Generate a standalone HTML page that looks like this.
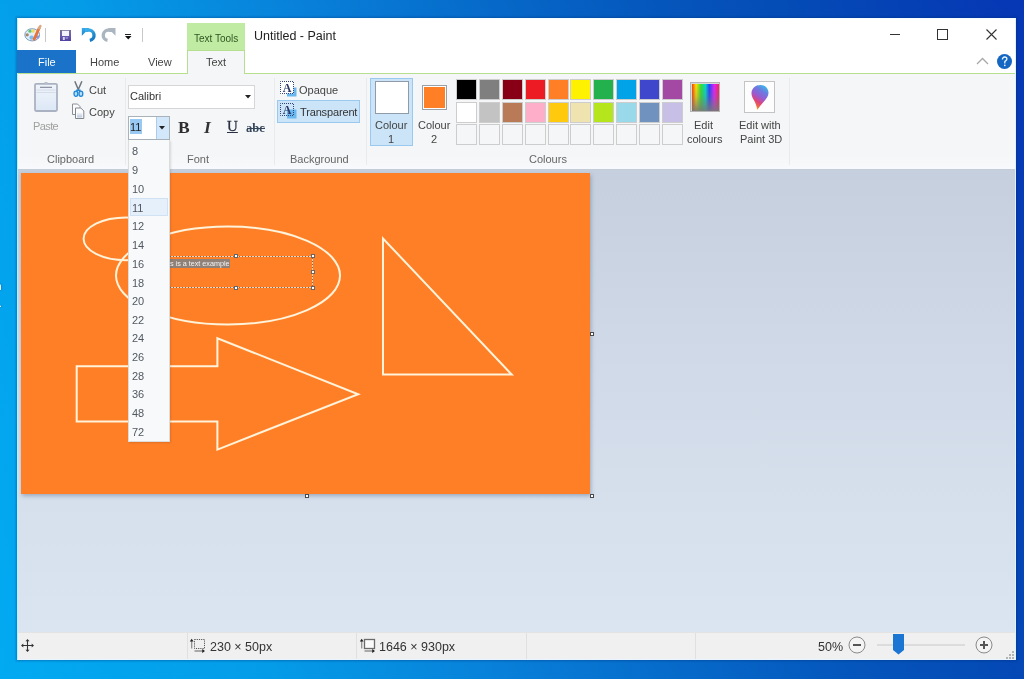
<!DOCTYPE html>
<html><head><meta charset="utf-8">
<style>
*{margin:0;padding:0;box-sizing:border-box}
html,body{width:1024px;height:679px;overflow:hidden;-webkit-font-smoothing:antialiased}
body{position:relative;font-family:"Liberation Sans",sans-serif;
background:linear-gradient(74deg,#02aaf2 0%,#049ce8 22%,#0880d9 41%,#0668c8 57%,#0556bc 70%,#044cb6 80%,#0636b4 100%);}
.a{position:absolute}
.t{position:absolute;white-space:nowrap;color:#333;line-height:1;padding-top:1px;will-change:transform}
.sep{position:absolute;width:1px;background:#e9eaec}
.cell{position:absolute;width:21px;height:21px;border:1px solid #cdcdcd;background:#f5f6f7}
.cell i{position:absolute;left:0;top:0;right:0;bottom:0;display:block}
.dd{position:absolute;left:132px;font-size:11px;color:#525860;line-height:1;padding-top:1px;will-change:transform}
svg{position:absolute;overflow:visible}
</style></head>
<body>
<!-- window base -->
<div class="a" style="left:16px;top:17px;width:1001px;height:644px;background:rgba(0,40,110,0.35);filter:blur(1px)"></div>
<div class="a" style="left:17px;top:18px;width:999px;height:642px;background:#fff;border:1px solid #b4f0ff;border-top-color:#f4feff;border-right-color:#dcf4ff;border-bottom-color:#e8f4ff"></div>
<div class="t" style="left:-4px;top:281px;font-size:10px;color:#fff;text-shadow:0 0 2px #003060">n</div>
<div class="t" style="left:-1px;top:298px;font-size:10px;color:#fff;text-shadow:0 0 2px #003060">.</div>

<!-- ===== TITLE BAR ===== -->
<svg style="left:24px;top:25px" width="18" height="17" viewBox="0 0 18 17">
  <ellipse cx="8.2" cy="9.8" rx="7.4" ry="6.1" fill="#e2eef8" stroke="#7b9ec2" stroke-width="1"/>
  <circle cx="3.2" cy="9.8" r="1.6" fill="#a88462"/>
  <circle cx="6" cy="6.2" r="1.6" fill="#62c474"/>
  <circle cx="9.2" cy="6" r="1.7" fill="#f2da66"/>
  <circle cx="7.6" cy="12.6" r="2.2" fill="#84bcf0"/>
  <circle cx="13.6" cy="12" r="1.8" fill="#8a98e2"/>
  <path d="M10.2 14.2 L15.2 3.2" stroke="#ea7238" stroke-width="2.8" stroke-linecap="round"/>
  <path d="M15 3.2 L16.3 1.2" stroke="#dca884" stroke-width="2.6" stroke-linecap="round"/>
</svg>
<div class="a" style="left:45px;top:28px;width:1px;height:14px;background:#c8c8c8"></div>
<svg style="left:60px;top:29.5px" width="11" height="11" viewBox="0 0 11 11">
  <defs><linearGradient id="sg" x1="0" y1="0" x2="0" y2="1"><stop offset="0" stop-color="#7a7098"/><stop offset="0.5" stop-color="#6a5cb0"/><stop offset="1" stop-color="#5040a0"/></linearGradient></defs>
  <rect x="0" y="0" width="11" height="11" fill="url(#sg)"/>
  <rect x="2" y="0.8" width="7" height="5.2" fill="#f4f2fa"/>
  <rect x="2.8" y="7" width="2" height="3" fill="#d8d2f0"/>
  <rect x="5.5" y="7.2" width="2.5" height="1.5" fill="#9a90d0"/>
</svg>
<svg style="left:80px;top:27px" width="18" height="17" viewBox="0 0 18 17">
  <defs><linearGradient id="ug" x1="0" y1="0" x2="0.4" y2="1"><stop offset="0" stop-color="#3cb0ec"/><stop offset="1" stop-color="#1a7cc4"/></linearGradient></defs>
  <path d="M1.8 1 V8.8 L9.5 1 Z" fill="url(#ug)"/>
  <path d="M5 3.2 H8 A5.1 5.1 0 0 1 9.8 13.3" fill="none" stroke="url(#ug)" stroke-width="3.4"/>
</svg>
<svg style="left:100px;top:27px" width="18" height="17" viewBox="0 0 18 17">
  <path d="M15.5 1 V8.8 L7.8 1 Z" fill="#aab5c0"/>
  <path d="M12.3 3.2 H9.3 A5.1 5.1 0 0 0 7.5 13.3" fill="none" stroke="#aab5c0" stroke-width="3.4"/>
</svg>
<div class="a" style="left:125px;top:34px;width:6px;height:1px;background:#222"></div>
<svg style="left:125px;top:36px" width="7" height="4" viewBox="0 0 7 4"><path d="M0 0 H6.5 L3.25 3.5Z" fill="#111"/></svg>
<div class="a" style="left:142px;top:28px;width:1px;height:14px;background:#c8c8c8"></div>
<!-- window controls -->
<div class="a" style="left:890px;top:34px;width:10px;height:1px;background:#333"></div>
<div class="a" style="left:937px;top:29px;width:11px;height:11px;border:1px solid #333"></div>
<svg style="left:986px;top:29px" width="11" height="11" viewBox="0 0 11 11"><path d="M0.5 0.5 L10.5 10.5 M10.5 0.5 L0.5 10.5" stroke="#333" stroke-width="1.1"/></svg>
<svg style="left:976px;top:57px" width="13" height="8" viewBox="0 0 13 8"><path d="M1 7 L6.5 1.5 L12 7" fill="none" stroke="#a8a8a8" stroke-width="1.3"/></svg>
<svg style="left:997px;top:54px" width="15" height="15" viewBox="0 0 15 15"><circle cx="7.5" cy="7.5" r="7.5" fill="#1566c2"/><path d="M5.4 5.4 C5.4 3.9 6.4 3 7.7 3 C9 3 9.9 3.8 9.9 5 C9.9 6.3 8.4 6.8 7.8 7.7 V9.4" fill="none" stroke="#e8f6ff" stroke-width="1.3"/><circle cx="7.8" cy="11.3" r="0.85" fill="#e8f6ff"/></svg>
<div class="t" style="left:254px;top:28.5px;font-size:12.5px;color:#222">Untitled - Paint</div>
<div class="a" style="left:187px;top:23px;width:58px;height:27px;background:#c0eba2"></div>
<div class="t" style="left:194px;top:32.5px;font-size:10px;color:#2f5624">Text Tools</div>

<!-- ===== TABS ===== -->
<div class="a" style="left:17px;top:50px;width:59px;height:23px;background:#1a72c9"></div>
<div class="t" style="left:38px;top:56px;font-size:11px;color:#fff">File</div>
<div class="t" style="left:90px;top:56px;font-size:11px;color:#444">Home</div>
<div class="t" style="left:148px;top:56px;font-size:11px;color:#444">View</div>
<div class="a" style="left:18px;top:73px;width:997px;height:1px;background:#b6e090"></div>
<div class="a" style="left:187px;top:50px;width:58px;height:24px;background:#f5f6f7;border:1px solid #b6e090;border-bottom:none"></div>
<div class="t" style="left:206px;top:56px;font-size:11px;color:#444">Text</div>

<!-- ===== RIBBON ===== -->
<div class="a" style="left:18px;top:74px;width:997px;height:96px;background:linear-gradient(180deg,#f5f6f7 0%,#f5f6f7 85%,#f7f9fc 100%);border-bottom:1px solid #c4ccd8"></div>
<!-- Clipboard -->
<svg style="left:34px;top:82px" width="24" height="30" viewBox="0 0 24 30">
  <defs><linearGradient id="pg" x1="0" y1="0" x2="0" y2="1"><stop offset="0" stop-color="#f0f4fa"/><stop offset="1" stop-color="#dce8f6"/></linearGradient></defs>
  <rect x="1" y="1.8" width="22" height="27.2" rx="1.2" fill="url(#pg)" stroke="#aab2c2" stroke-width="1.8"/>
  <path d="M6 5.3 H18" stroke="#7d8596" stroke-width="1.1"/>
  <path d="M2.5 8 H21.5 M2.5 10.5 H21.5" stroke="#d0d8e4" stroke-width="0.8"/>
  <rect x="10.5" y="0" width="3" height="2" fill="#b8bec8"/>
</svg>
<div class="t" style="left:33px;top:120px;font-size:11px;color:#a0a0a0;letter-spacing:-0.6px">Paste</div>
<svg style="left:73px;top:81px" width="11" height="17" viewBox="0 0 11 17">
  <path d="M1.8 0.3 L5.4 8.8 M8.9 0.3 L5.2 8.8" stroke="#6e757d" stroke-width="1.5"/>
  <path d="M3.2 9.3 H7.6" stroke="#1e88d8" stroke-width="1.6"/>
  <ellipse cx="2.9" cy="12.8" rx="1.9" ry="2.6" fill="#b6def6" stroke="#1e88d8" stroke-width="1.3"/>
  <ellipse cx="7.9" cy="12.8" rx="1.9" ry="2.6" fill="#b6def6" stroke="#1e88d8" stroke-width="1.3"/>
</svg>
<div class="t" style="left:89px;top:84px;font-size:11px;color:#444">Cut</div>
<svg style="left:71px;top:103px" width="14" height="17" viewBox="0 0 14 17">
  <defs><linearGradient id="cg" x1="0" y1="0" x2="0" y2="1"><stop offset="0" stop-color="#f6f8fb"/><stop offset="1" stop-color="#b8c8dc"/></linearGradient></defs>
  <path d="M1.5 1 H6.5 L9 3.5 V11.5 H1.5 Z" fill="#fbfbfb" stroke="#8a8f98" stroke-width="1"/>
  <path d="M4.5 5 H9.8 L12.8 8 V15.5 H4.5 Z" fill="#fdfdfd" stroke="#80868f" stroke-width="1"/>
  <rect x="6" y="9.5" width="5.3" height="5" fill="url(#cg)"/>
</svg>
<div class="t" style="left:89px;top:106px;font-size:11px;color:#444">Copy</div>
<div class="t" style="left:47px;top:153px;font-size:11px;color:#666">Clipboard</div>
<div class="sep" style="left:125px;top:78px;height:87px"></div>

<!-- Font -->
<div class="a" style="left:128px;top:85px;width:127px;height:24px;background:#fff;border:1px solid #d6d6d6"></div>
<div class="t" style="left:130px;top:90px;font-size:11px;color:#333">Calibri</div>
<svg style="left:245px;top:95px" width="6" height="4" viewBox="0 0 6 4"><path d="M0 0 H6 L3 3.5Z" fill="#222"/></svg>
<div class="a" style="left:128px;top:116px;width:42px;height:24px;background:#fff;border:1px solid #a9b1bb"></div>
<div class="a" style="left:156px;top:117px;width:13px;height:22px;background:#d2e7f9;border-left:1px solid #a8cdee"></div>
<svg style="left:159px;top:126px" width="6" height="4" viewBox="0 0 6 4"><path d="M0 0 H6 L3 3.5Z" fill="#222"/></svg>
<div class="a" style="left:130px;top:119px;width:12px;height:15px;background:#99c9f3"></div>
<div class="t" style="left:130px;top:121px;font-size:11px;color:#222">11</div>
<div class="t" style="left:178px;top:118px;font-size:17.5px;font-family:'Liberation Serif';font-weight:bold;color:#2e2e2e">B</div>
<div class="t" style="left:204px;top:118px;font-size:17.5px;font-family:'Liberation Serif';font-style:italic;font-weight:bold;color:#333">I</div>
<div class="t" style="left:227px;top:118px;font-size:15px;font-family:'Liberation Serif';color:#2a3040;text-decoration:underline;-webkit-text-stroke:0.3px #2a3040">U</div>
<div class="t" style="left:246px;top:121px;font-size:12.5px;font-family:'Liberation Serif';font-weight:bold;color:#34465a">abc</div>
<div class="a" style="left:247px;top:128px;width:18px;height:1px;background:#34465a"></div>
<div class="t" style="left:187px;top:153px;font-size:11px;color:#666">Font</div>
<div class="sep" style="left:274px;top:78px;height:87px"></div>

<!-- Background -->
<svg style="left:279px;top:80px" width="19" height="18" viewBox="0 0 19 18">
  <rect x="8" y="7.5" width="9.5" height="9" fill="#6ab8f0"/>
  <rect x="1.5" y="1.5" width="13" height="12" fill="#fff" stroke="#34447a" stroke-width="1" stroke-dasharray="1 1" stroke-dashoffset="0.5"/>
  <text x="8" y="11.8" font-family="Liberation Serif" font-weight="bold" font-size="12" fill="#2a3868" text-anchor="middle">A</text>
</svg>
<div class="t" style="left:299px;top:84px;font-size:11px;color:#444">Opaque</div>
<div class="a" style="left:277px;top:100px;width:83px;height:23px;background:#cce4f7;border:1px solid #99c9ef"></div>
<svg style="left:279px;top:102px" width="19" height="18" viewBox="0 0 19 18">
  <rect x="8" y="7.5" width="9.5" height="9" fill="#6ab8f0"/>
  <rect x="1.5" y="1.5" width="13" height="12" fill="none" stroke="#34447a" stroke-width="1" stroke-dasharray="1 1" stroke-dashoffset="0.5"/>
  <text x="8" y="11.8" font-family="Liberation Serif" font-weight="bold" font-size="12" fill="#2a3868" text-anchor="middle">A</text>
</svg>
<div class="t" style="left:300px;top:106px;font-size:11px;color:#333;letter-spacing:-0.15px">Transparent</div>
<div class="t" style="left:290px;top:153px;font-size:11px;color:#666">Background</div>
<div class="sep" style="left:366px;top:78px;height:87px"></div>

<!-- Colours -->
<div class="a" style="left:370px;top:78px;width:43px;height:68px;background:#cce4f7;border:1px solid #99c9ef"></div>
<div class="a" style="left:375px;top:81px;width:34px;height:33px;background:#fff;border:1px solid #8f9ba8"></div>
<div class="t" style="left:375px;top:119px;font-size:11px;color:#444">Colour</div>
<div class="t" style="left:388px;top:133px;font-size:11px;color:#444">1</div>
<div class="a" style="left:422px;top:85px;width:25px;height:25px;background:#fff;border:1px solid #9aa0a8"></div>
<div class="a" style="left:424px;top:87px;width:21px;height:21px;background:#ff7f27"></div>
<div class="t" style="left:418px;top:119px;font-size:11px;color:#444">Colour</div>
<div class="t" style="left:431px;top:133px;font-size:11px;color:#444">2</div>
<div class="cell" style="left:456px;top:79px"><i style="background:#000000"></i></div>
<div class="cell" style="left:479px;top:79px"><i style="background:#7f7f7f"></i></div>
<div class="cell" style="left:502px;top:79px"><i style="background:#880015"></i></div>
<div class="cell" style="left:525px;top:79px"><i style="background:#ed1c24"></i></div>
<div class="cell" style="left:548px;top:79px"><i style="background:#ff7f27"></i></div>
<div class="cell" style="left:570px;top:79px"><i style="background:#fff200"></i></div>
<div class="cell" style="left:593px;top:79px"><i style="background:#22b14c"></i></div>
<div class="cell" style="left:616px;top:79px"><i style="background:#00a2e8"></i></div>
<div class="cell" style="left:639px;top:79px"><i style="background:#3f48cc"></i></div>
<div class="cell" style="left:662px;top:79px"><i style="background:#a349a4"></i></div>
<div class="cell" style="left:456px;top:102px"><i style="background:#ffffff"></i></div>
<div class="cell" style="left:479px;top:102px"><i style="background:#c3c3c3"></i></div>
<div class="cell" style="left:502px;top:102px"><i style="background:#b97a57"></i></div>
<div class="cell" style="left:525px;top:102px"><i style="background:#ffaec9"></i></div>
<div class="cell" style="left:548px;top:102px"><i style="background:#ffc90e"></i></div>
<div class="cell" style="left:570px;top:102px"><i style="background:#efe4b0"></i></div>
<div class="cell" style="left:593px;top:102px"><i style="background:#b5e61d"></i></div>
<div class="cell" style="left:616px;top:102px"><i style="background:#99d9ea"></i></div>
<div class="cell" style="left:639px;top:102px"><i style="background:#7092be"></i></div>
<div class="cell" style="left:662px;top:102px"><i style="background:#c8bfe7"></i></div>
<div class="cell" style="left:456px;top:124px"></div>
<div class="cell" style="left:479px;top:124px"></div>
<div class="cell" style="left:502px;top:124px"></div>
<div class="cell" style="left:525px;top:124px"></div>
<div class="cell" style="left:548px;top:124px"></div>
<div class="cell" style="left:570px;top:124px"></div>
<div class="cell" style="left:593px;top:124px"></div>
<div class="cell" style="left:616px;top:124px"></div>
<div class="cell" style="left:639px;top:124px"></div>
<div class="cell" style="left:662px;top:124px"></div>
<div class="t" style="left:529px;top:153px;font-size:11px;color:#666">Colours</div>
<div class="a" style="left:690px;top:82px;width:30px;height:30px;background:#d8d8d8;border:1px solid #b4b4b4;padding:0.5px">
  <div style="width:100%;height:100%;background:linear-gradient(180deg,rgba(120,120,120,0) 0%,rgba(120,120,120,0.25) 45%,rgba(120,120,120,0.9) 100%),linear-gradient(90deg,#ff3a00,#ffe000 15%,#30e030 33%,#00d8c8 50%,#2040ff 64%,#e020ff 82%,#ff2050)"></div>
</div>
<div class="t" style="left:694px;top:119px;font-size:11px;color:#444">Edit</div>
<div class="t" style="left:687px;top:133px;font-size:11px;color:#444">colours</div>
<div class="a" style="left:744px;top:81px;width:31px;height:32px;background:#fdfdfd;border:1px solid #c4c4c4"></div>
<svg style="left:750px;top:84px" width="20" height="27" viewBox="0 0 20 27">
  <defs><linearGradient id="p3d" x1="0.75" y1="0" x2="0.3" y2="1">
    <stop offset="0" stop-color="#38bce8"/><stop offset="0.25" stop-color="#6c7ae0"/><stop offset="0.5" stop-color="#9a5ad0"/><stop offset="0.7" stop-color="#e04478"/><stop offset="0.88" stop-color="#f07040"/><stop offset="1" stop-color="#ffd020"/></linearGradient></defs>
  <path d="M10.5 1 C15.2 1 18.5 4.4 18.5 8.8 C18.5 12.5 16.3 15 13.5 18 C11 20.8 9 23.5 7.2 26 C6.8 22 5.5 19 3.8 16 C2.3 13.5 1.5 11.5 1.5 9.3 C1.5 4.6 5.5 1 10.5 1 Z" fill="url(#p3d)"/>
</svg>
<div class="t" style="left:739px;top:119px;font-size:11px;color:#444">Edit with</div>
<div class="t" style="left:740px;top:133px;font-size:11px;color:#444">Paint 3D</div>
<div class="sep" style="left:789px;top:78px;height:87px"></div>

<!-- ===== CANVAS AREA ===== -->
<div class="a" style="left:18px;top:170px;width:997px;height:462px;background:linear-gradient(180deg,#c5cfdd 0%,#d0d9e7 40%,#dbe5f1 100%)"></div>
<div class="a" style="left:21px;top:173px;width:569px;height:321px;background:#ff7f27;box-shadow:1px 2px 4px rgba(70,90,120,0.4)"></div>
<svg style="left:0;top:0" width="1024" height="679" viewBox="0 0 1024 679">
  <g fill="none" stroke="#fff3da" stroke-width="2">
    <ellipse cx="126" cy="238.8" rx="42.4" ry="21.4"/>
    <ellipse cx="228" cy="275.5" rx="112" ry="49"/>
    <path d="M383 238.5 L383 374.6 L511.8 374.6 Z"/>
    <path d="M76.7 366.3 H217.4 V338.2 L358.2 394.2 L217.4 449.6 V421.4 H76.7 Z"/>
  </g>
</svg>
<!-- text box -->
<div class="a" style="left:169px;top:259px;width:61px;height:9px;background:#8f8178"></div>
<div class="t" style="left:170px;top:259px;font-size:7.2px;color:#f4f4f4;padding-top:1px">s is a text example</div>
<svg style="left:0;top:0" width="1024" height="679" viewBox="0 0 1024 679">
  <path d="M158.5 256.5 H312.5 V287.5 H158.5 Z" fill="none" stroke="#f6d2b0" stroke-width="1"/>
  <path d="M158.5 256.5 H312.5 V287.5 H158.5 Z" fill="none" stroke="#7a6a60" stroke-width="1" stroke-dasharray="1 2" stroke-dashoffset="0.5"/>
  <g fill="#fff" stroke="#666" stroke-width="1">
    <rect x="234.5" y="254.5" width="3" height="3"/>
    <rect x="311.5" y="254.5" width="3" height="3"/>
    <rect x="311.5" y="270.5" width="3" height="3"/>
    <rect x="234.5" y="286.5" width="3" height="3"/>
    <rect x="311.5" y="286.5" width="3" height="3"/>
  </g>
  <g fill="#fff" stroke="#4a4a4a" stroke-width="1">
    <rect x="590.5" y="332.5" width="3" height="3"/>
    <rect x="305.5" y="494.5" width="3" height="3"/>
    <rect x="590.5" y="494.5" width="3" height="3"/>
  </g>
</svg>

<!-- ===== STATUS ===== -->
<div class="a" style="left:18px;top:632px;width:997px;height:27px;background:#f0f0f0;border-top:1px solid #e3e3e3"></div>
<svg style="left:21px;top:639px" width="13" height="13" viewBox="0 0 13 13">
  <path d="M6.5 1.5 V11.5 M1.5 6.5 H11.5" stroke="#333" stroke-width="1.1"/>
  <path d="M6.5 0 L4.5 2.3 H8.5Z M6.5 13 L4.5 10.7 H8.5Z M0 6.5 L2.3 4.5 V8.5Z M13 6.5 L10.7 4.5 V8.5Z" fill="#333"/>
</svg>
<div class="a" style="left:187px;top:633px;width:1px;height:26px;background:#e0e0e0"></div>
<svg style="left:190px;top:638px" width="16" height="15" viewBox="0 0 16 15">
  <path d="M1.7 3 V10.5" stroke="#8a8a8a" stroke-width="1.2"/><path d="M1.7 0.8 L-0.2 3.6 H3.6Z" fill="#222"/>
  <rect x="4.5" y="1.5" width="10" height="9" fill="none" stroke="#555" stroke-width="1" stroke-dasharray="1.2 1"/>
  <path d="M4.5 13 H12.5" stroke="#8a8a8a" stroke-width="1.4"/><path d="M15 13 L12.2 11 V15Z" fill="#222"/>
</svg>
<div class="t" style="left:210px;top:640px;font-size:12.5px;color:#333">230 × 50px</div>
<div class="a" style="left:356px;top:633px;width:1px;height:26px;background:#e0e0e0"></div>
<svg style="left:360px;top:638px" width="16" height="15" viewBox="0 0 16 15">
  <path d="M1.7 3 V10.5" stroke="#8a8a8a" stroke-width="1.2"/><path d="M1.7 0.8 L-0.2 3.6 H3.6Z" fill="#222"/>
  <rect x="4.5" y="1.5" width="10" height="9" fill="#fafafa" stroke="#6a6a6a" stroke-width="1.3"/>
  <path d="M4.5 13 H12.5" stroke="#8a8a8a" stroke-width="1.4"/><path d="M15 13 L12.2 11 V15Z" fill="#222"/>
</svg>
<div class="t" style="left:379px;top:640px;font-size:12.5px;color:#333">1646 × 930px</div>
<div class="a" style="left:526px;top:633px;width:1px;height:26px;background:#e0e0e0"></div>
<div class="a" style="left:695px;top:633px;width:1px;height:26px;background:#e0e0e0"></div>
<div class="t" style="left:818px;top:640px;font-size:12.5px;color:#333">50%</div>
<svg style="left:848px;top:636px" width="18" height="18" viewBox="0 0 18 18">
  <circle cx="9" cy="9" r="8" fill="#f4f4f4" stroke="#8a8a8a" stroke-width="1"/>
  <path d="M5 9 H13" stroke="#555" stroke-width="2"/>
</svg>
<div class="a" style="left:877px;top:644px;width:88px;height:2px;background:#dcdcdc"></div>
<svg style="left:893px;top:634px" width="12" height="21" viewBox="0 0 12 21">
  <path d="M0 0 H11 V16 L5.5 20.5 L0 16 Z" fill="#1a76d2"/>
</svg>
<svg style="left:975px;top:636px" width="18" height="18" viewBox="0 0 18 18">
  <circle cx="9" cy="9" r="8" fill="#f4f4f4" stroke="#8a8a8a" stroke-width="1"/>
  <path d="M5 9 H13 M9 5 V13" stroke="#555" stroke-width="2"/>
</svg>
<svg style="left:1006px;top:650px" width="9" height="9" viewBox="0 0 9 9" fill="#b4b4b4">
  <rect x="6" y="1" width="2" height="2"/><rect x="3" y="4" width="2" height="2"/><rect x="6" y="4" width="2" height="2"/>
  <rect x="0" y="7" width="2" height="2"/><rect x="3" y="7" width="2" height="2"/><rect x="6" y="7" width="2" height="2"/>
</svg>

<!-- ===== DROPDOWN ===== -->
<div class="a" style="left:128px;top:140px;width:42px;height:302px;background:#f8f9fa;border:1px solid #dcdcdc;border-top:none;box-shadow:1px 1px 2px rgba(0,0,0,0.12)"></div>
<div class="a" style="left:130px;top:198px;width:38px;height:18px;background:#e5f0fb;border:1px solid #cfe1f3"></div>
<div class="dd" style="top:145px">8</div>
<div class="dd" style="top:164px">9</div>
<div class="dd" style="top:183px">10</div>
<div class="dd" style="top:202px">11</div>
<div class="dd" style="top:220px">12</div>
<div class="dd" style="top:239px">14</div>
<div class="dd" style="top:258px">16</div>
<div class="dd" style="top:277px">18</div>
<div class="dd" style="top:295px">20</div>
<div class="dd" style="top:314px">22</div>
<div class="dd" style="top:332px">24</div>
<div class="dd" style="top:351px">26</div>
<div class="dd" style="top:370px">28</div>
<div class="dd" style="top:388px">36</div>
<div class="dd" style="top:407px">48</div>
<div class="dd" style="top:426px">72</div>
</body></html>
